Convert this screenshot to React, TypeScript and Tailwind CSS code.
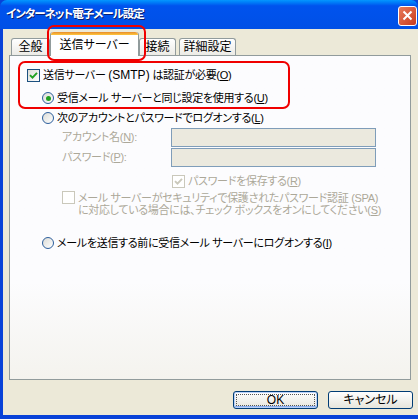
import React from "react";

const jp = "font-['Liberation_Sans','Noto_Sans_CJK_JP',sans-serif] [font-feature-settings:'palt']";

const Check = ({ checked, disabled }: { checked: boolean; disabled?: boolean }) => (
  <span
    className={`w-[13px] h-[13px] border flex items-center justify-center shrink-0 ${
      disabled ? "border-[#cac8bb] bg-white" : "border-[#1c5180] bg-linear-to-br from-[#dcdcd7] to-white"
    }`}
  >
    {checked && (
      <svg width="9" height="9" viewBox="0 0 9 9">
        <path d="M1 4.2 L3.5 6.7 L8 1.8" stroke={disabled ? "#cac8bb" : "#21a121"} strokeWidth="1.9" fill="none" />
      </svg>
    )}
  </span>
);

const Radio = ({ checked }: { checked?: boolean }) => (
  <span className="w-[12px] h-[12px] rounded-full border border-[#2c5e9c] bg-linear-to-br from-[#dcdcd7] to-white flex items-center justify-center shrink-0">
    {checked && <span className="w-[5px] h-[5px] rounded-full bg-[#21a121]" />}
  </span>
);

const U = ({ c }: { c: string }) => <span className="underline">{c}</span>;

const Tab = ({ label, w, extra }: { label: string; w: string; extra?: string }) => (
  <div
    className={`${w} ${extra || ""} h-[17px] mb-[1px] border border-b-0 border-[#919b9c] rounded-t-[3px] bg-linear-to-b from-white to-[#ecebe6] flex items-center justify-center text-[12px] text-black`}
  >
    {label}
  </div>
);

export default function App() {
  return (
    <div className={`relative w-[418px] h-[419px] overflow-hidden bg-[#0842d8] flex flex-col ${jp}`}>
      {/* title bar */}
      <div className="h-[29px] shrink-0 rounded-t-[7px] bg-linear-to-b from-[#0997ff] via-[#0053ee] via-20% to-[#0050e6] flex items-center justify-between">
        <span className="pl-[6px] text-white text-[11.5px] tracking-[-1px] font-bold [text-shadow:1px_1px_0_#0a1e6e]">
          インターネット電子メール設定
        </span>
        <div className="w-[19px] h-[20px] mr-[1px] mt-[2px] rounded-[3px] border border-white bg-linear-to-br from-[#e87a5a] to-[#c8391a] flex items-center justify-center">
          <svg width="11" height="11" viewBox="0 0 11 11">
            <path d="M1.5 1.5 L9.5 9.5 M9.5 1.5 L1.5 9.5" stroke="white" strokeWidth="2" />
          </svg>
        </div>
      </div>

      {/* body */}
      <div className="flex-1 ml-[3px] mb-[4px] bg-[#ece9d8] flex flex-col pt-[3px]">
        <div className="h-[24px] flex items-end ml-[8px] relative z-10">
          <Tab label="全般" w="w-[39px]" />
          <div className="w-[89px] h-[24px] bg-white border-x border-[#919b9c] rounded-t-[3px] flex flex-col">
            <div className="h-[3px] rounded-t-[3px] bg-linear-to-b from-[#e68b2c] to-[#ffc83c]" />
            <div className="flex-1 flex items-center justify-center text-[12px] text-black pb-[2px]">送信サーバー</div>
          </div>
          <Tab label="接続" w="w-[37px]" />
          <Tab label="詳細設定" w="w-[57px]" extra="ml-[3px]" />
        </div>

        <div className="-mt-px ml-[6px] w-[402px] h-[325px] border border-[#919b9c] bg-linear-to-b from-[#fcfcfe] via-[#fcfcfe] via-70% to-[#f4f3ee] flex flex-col text-[11px] tracking-[-0.3px] text-black">
          <div className="mt-[11px] ml-[17px] h-[16px] flex items-center gap-[3px]">
            <Check checked />
            <span>
              送信サーバー <span className="text-[12px] tracking-normal">(SMTP)</span> は認証が必要(<U c="O" />)
            </span>
          </div>
          <div className="mt-[7px] ml-[32px] h-[16px] flex items-center gap-[3px]">
            <Radio checked />
            <span>
              受信メール サーバーと同じ設定を使用する(<U c="U" />)
            </span>
          </div>
          <div className="mt-[4px] ml-[32px] h-[16px] flex items-center gap-[3px]">
            <Radio />
            <span>
              次のアカウントとパスワードでログオンする(<U c="L" />)
            </span>
          </div>
          <div className="mt-[2px] ml-[52px] h-[19px] flex items-center text-[#aca899]">
            <span className="w-[109px]">
              アカウント名(<U c="N" />):
            </span>
            <div className="w-[205px] h-[19px] border border-[#7f9db9] bg-[#ebe9de]" />
          </div>
          <div className="mt-[1px] ml-[52px] h-[19px] flex items-center text-[#aca899]">
            <span className="w-[109px]">
              パスワード(<U c="P" />):
            </span>
            <div className="w-[205px] h-[19px] border border-[#7f9db9] bg-[#ebe9de]" />
          </div>
          <div className="mt-[6px] ml-[162px] h-[16px] flex items-center gap-[3px] text-[#aca899]">
            <Check checked disabled />
            <span>
              パスワードを保存する(<U c="R" />)
            </span>
          </div>
          <div className="mt-[2px] ml-[52px] flex items-start gap-[3px] text-[#aca899]">
            <Check checked={false} disabled />
            <span className="leading-[12px] mt-[1px] whitespace-nowrap">
              メール サーバーがセキュリティで保護されたパスワード認証 (SPA)
              <br />
              に対応している場合には、チェック ボックスをオンにしてください(<U c="S" />)
            </span>
          </div>
          <div className="mt-[19px] ml-[32px] h-[16px] flex items-center gap-[3px]">
            <Radio />
            <span>
              メールを送信する前に受信メール サーバーにログオンする(<U c="I" />)
            </span>
          </div>
        </div>

        <div className="mt-[11px] self-end mr-[5px] flex gap-[10px] text-[12px] text-black">
          <div className="w-[85px] h-[18px] rounded-[3px] border border-[#003c74] bg-linear-to-b from-white to-[#e6e5dc] shadow-[inset_0_0_0_1px_#b9d1fa,inset_0_-1px_0_1px_#89adf0] flex items-center justify-center p-[2px]">
            <div className="w-full h-full border border-dotted border-[#555] flex items-center justify-center leading-none">
              OK
            </div>
          </div>
          <div className="w-[85px] h-[18px] rounded-[3px] border border-[#003c74] bg-linear-to-b from-white to-[#e6e5dc] flex items-center justify-center leading-none">
            キャンセル
          </div>
        </div>
      </div>

      {/* annotation boxes */}
      <div className="absolute left-[47px] top-[25px] w-[99px] h-[36px] border-2 border-[#f00000] rounded-[7px] z-20" />
      <div className="absolute left-[18px] top-[61px] w-[272px] h-[48px] border-2 border-[#f00000] rounded-[7px] z-20" />
    </div>
  );
}
